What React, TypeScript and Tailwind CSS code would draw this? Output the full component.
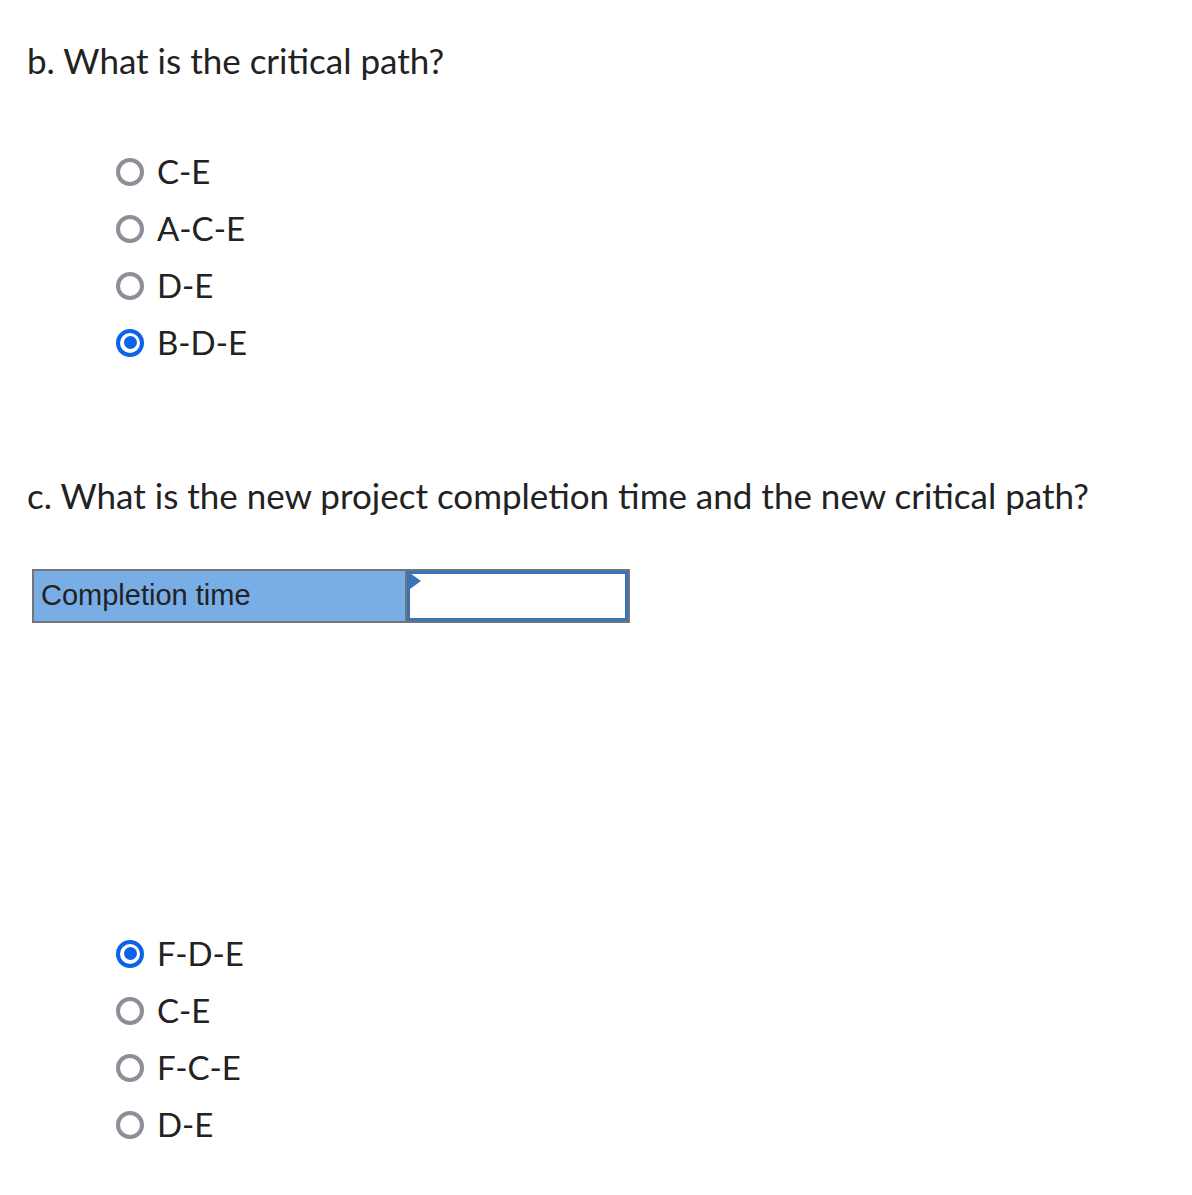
import React from "react";

const font = { fontFamily: "Lato, 'Noto Sans', sans-serif" };

function Radio({ label, checked }: { label: string; checked?: boolean }) {
  return (
    <div className="flex items-center h-[57px]">
      {checked ? (
        <span className="w-[28px] h-[28px] rounded-full border-[4px] border-[#0b63e5] flex items-center justify-center">
          <span className="w-[13px] h-[13px] rounded-full bg-[#0b63e5]" />
        </span>
      ) : (
        <span className="w-[28px] h-[28px] rounded-full border-[4px] border-[#8e8e99]" />
      )}
      <span className="ml-[13px] text-[33px] text-[#222]">{label}</span>
    </div>
  );
}

export default function App() {
  return (
    <div className="w-[1192px] h-[1195px] bg-white text-[#222]" style={font}>
      <div className="pl-[27px] pt-[38px]">
        <div className="text-[35px] leading-[44px]">b. What is the critical path?</div>
        <div className="pl-[89px] mt-[61px]">
          <Radio label="C-E" />
          <Radio label="A-C-E" />
          <Radio label="D-E" />
          <Radio label="B-D-E" checked />
        </div>
        <div className="text-[35px] leading-[44px] mt-[102px]">
          c. What is the new project completion time and the new critical path?
        </div>
        <div className="ml-[5px] mt-[52px] w-[598px] h-[54px] border-2 border-[#757575] flex">
          <div className="w-[373px] bg-[#79ade5] border-r-2 border-[#757575] flex items-center pl-[7px] text-[29px]" style={{ fontFamily: "'Liberation Sans', Arial, sans-serif" }}>
            Completion time
          </div>
          <div className="flex-1 bg-white border-[3px] border-[#3a74b8] relative">
            <span className="absolute left-0 top-0 w-0 h-0 border-t-[8px] border-b-[8px] border-l-[11px] border-t-transparent border-b-transparent border-l-[#3a74b8] -mt-[1px]" />
          </div>
        </div>
        <div className="pl-[89px] mt-[302px]">
          <Radio label="F-D-E" checked />
          <Radio label="C-E" />
          <Radio label="F-C-E" />
          <Radio label="D-E" />
        </div>
      </div>
    </div>
  );
}
